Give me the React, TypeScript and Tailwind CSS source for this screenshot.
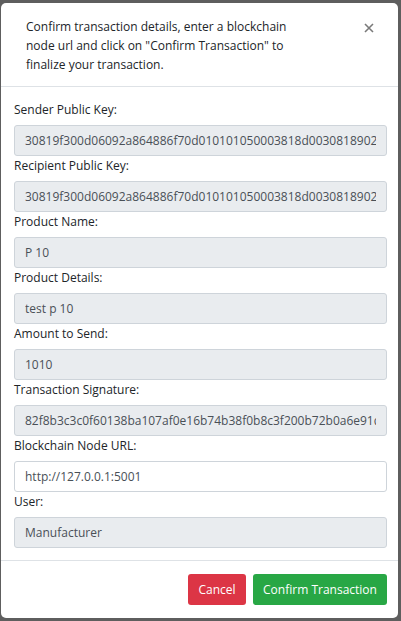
import React from 'react';

interface Field {
  label: string;
  value: string;
  editable?: boolean;
}

const fields: Field[] = [
  { label: 'Sender Public Key:', value: '30819f300d06092a864886f70d010101050003818d0030818902818100c5d3a1b4e7f2' },
  { label: 'Recipient Public Key:', value: '30819f300d06092a864886f70d010101050003818d0030818902818100a9b8c7d6e5f4' },
  { label: 'Product Name:', value: 'P 10' },
  { label: 'Product Details:', value: 'test p 10' },
  { label: 'Amount to Send:', value: '1010' },
  { label: 'Transaction Signature:', value: '82f8b3c3c0f60138ba107af0e16b74b38f0b8c3f200b72b0a6e91d4c5e' },
  { label: 'Blockchain Node URL:', value: 'http://127.0.0.1:5001', editable: true },
  { label: 'User:', value: 'Manufacturer' },
];

export default function App() {
  return (
    <div
      className="w-[401px] h-[621px] overflow-hidden bg-[#5e5e5e] pt-[3px] pl-[1px]"
      style={{ fontFamily: '"Open Sans", "Noto Sans", Arial, sans-serif' }}
    >
      <div className="w-[397px] h-[615px] bg-white rounded-[5px] flex flex-col text-[#212529] text-[12px]">
        {/* Header */}
        <div className="h-[84px] border-b border-[#dee2e6] flex items-start justify-between pl-[25px] pr-[24px] pt-[14px]">
          <p className="leading-[19px]">
            Confirm transaction details, enter a blockchain
            <br />
            node url and click on "Confirm Transaction" to
            <br />
            finalize your transaction.
          </p>
          <button className="mt-[6px] w-[10px] h-[10px] flex items-center justify-center">
            <svg width="10" height="10" viewBox="0 0 10 10">
              <path d="M1 1 L9 9 M9 1 L1 9" stroke="#7a7a7a" strokeWidth="1.6" />
            </svg>
          </button>
        </div>

        {/* Body */}
        <div className="pt-[13px] pb-[12px] pl-[13px] pr-[11px] flex flex-col">
          {fields.map(f => (
            <div key={f.label} className="flex flex-col">
              <label className="leading-[19px] h-[19px] mb-[6px]">{f.label}</label>
              <input
                readOnly
                value={f.value}
                className={`h-[31px] w-full px-[10px] border border-[#ced4da] rounded-[3px] text-[#495057] text-[12px] outline-none ${
                  f.editable ? 'bg-white' : 'bg-[#e9ecef]'
                }`}
                style={{ fontFamily: '"Open Sans", "Noto Sans", Arial, sans-serif' }}
              />
            </div>
          ))}
        </div>

        {/* Footer */}
        <div className="border-t border-[#dee2e6] pt-[13px] pr-[11px] flex justify-end gap-[7px]">
          <button className="h-[31px] w-[58px] rounded-[3px] bg-[#dc3545] text-white text-[12px]">Cancel</button>
          <button className="h-[31px] w-[134px] rounded-[3px] bg-[#28a745] text-white text-[12px]">
            Confirm Transaction
          </button>
        </div>
      </div>
    </div>
  );
}
